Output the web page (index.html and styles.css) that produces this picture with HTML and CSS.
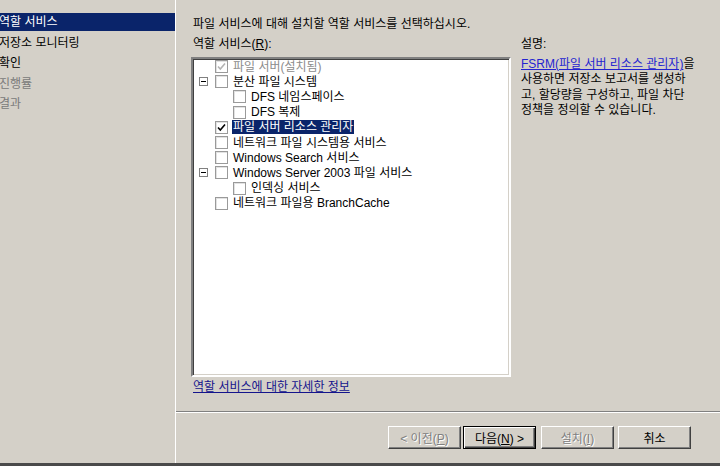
FILE: index.html
```html
<!DOCTYPE html>
<html lang="ko">
<head>
    <meta charset="UTF-8">
    <meta name="viewport" content="width=device-width, initial-scale=1.0">
    <title>역할 서비스 선택</title>
    <link rel="stylesheet" href="styles.css">
</head>
<body>
    <div class="wizard">
        <!-- Wizard steps -->
        <nav class="steps">
            <div class="step current">역할 서비스</div>
            <div class="step">저장소 모니터링</div>
            <div class="step">확인</div>
            <div class="step future">진행률</div>
            <div class="step future">결과</div>
        </nav>

        <div class="pane">
            <div class="page">
                <p class="intro">파일 서비스에 대해 설치할 역할 서비스를 선택하십시오.</p>

                <div class="columns">
                    <div class="services">
                        <div class="label">역할 서비스(<u>R</u>):</div>

                        <div class="tree">
                            <div class="row disabled">
                                <span class="exp"></span>
                                <span class="check"><svg viewBox="0 0 11 11"><path d="M2 5.5 L4.3 8 L9 2.5"/></svg></span>
                                <span class="text">파일 서버(설치됨)</span>
                            </div>
                            <div class="row">
                                <span class="exp"><i class="toggle"></i></span>
                                <span class="check"></span>
                                <span class="text">분산 파일 시스템</span>
                            </div>
                            <div class="row sub">
                                <span class="exp"></span>
                                <span class="check"></span>
                                <span class="text">DFS 네임스페이스</span>
                            </div>
                            <div class="row sub">
                                <span class="exp"></span>
                                <span class="check"></span>
                                <span class="text">DFS 복제</span>
                            </div>
                            <div class="row selected">
                                <span class="exp"></span>
                                <span class="check"><svg viewBox="0 0 11 11"><path d="M2 5.5 L4.3 8 L9 2.5"/></svg></span>
                                <span class="text">파일 서버 리소스 관리자</span>
                            </div>
                            <div class="row">
                                <span class="exp"></span>
                                <span class="check"></span>
                                <span class="text">네트워크 파일 시스템용 서비스</span>
                            </div>
                            <div class="row">
                                <span class="exp"></span>
                                <span class="check"></span>
                                <span class="text">Windows Search 서비스</span>
                            </div>
                            <div class="row">
                                <span class="exp"><i class="toggle"></i></span>
                                <span class="check"></span>
                                <span class="text">Windows Server 2003 파일 서비스</span>
                            </div>
                            <div class="row sub">
                                <span class="exp"></span>
                                <span class="check"></span>
                                <span class="text">인덱싱 서비스</span>
                            </div>
                            <div class="row">
                                <span class="exp"></span>
                                <span class="check"></span>
                                <span class="text">네트워크 파일용 BranchCache</span>
                            </div>
                        </div>

                        <a class="more" href="#">역할 서비스에 대한 자세한 정보</a>
                    </div>

                    <div class="desc">
                        <div class="label">설명:</div>
                        <p><a href="#">FSRM(파일 서버 리소스 관리자)</a>을<br>
                        사용하면 저장소 보고서를 생성하<br>
                        고, 할당량을 구성하고, 파일 차단<br>
                        정책을 정의할 수 있습니다.</p>
                    </div>
                </div>
            </div>

            <!-- Buttons -->
            <div class="footer">
                <button type="button" class="btn prev" disabled>&lt; 이전(<u>P</u>)</button>
                <button type="button" class="btn next">다음(<u>N</u>) &gt;</button>
                <button type="button" class="btn install" disabled>설치(<u>I</u>)</button>
                <button type="button" class="btn cancel">취소</button>
            </div>
        </div>
    </div>
</body>
</html>
```

FILE: styles.css
```css
body {
    margin: 0;
    background-color: #d4d0c8;
    font-family: "Liberation Sans", "Noto Sans CJK KR", sans-serif;
    font-size: 12px;
    color: #000000;
    overflow: hidden;
}

.wizard {
    display: flex;
    width: 720px;
    height: 463px;
    border-bottom: 3px solid #4a4a4a;
}

/* Left step list */
.steps {
    width: 175px;
    flex: none;
    padding-top: 13px;
    border-right: 1px solid #ffffff;
    overflow: hidden;
}

.step {
    height: 18px;
    line-height: 18px;
    margin-bottom: 2.5px;
    text-indent: -1px;
    white-space: nowrap;
}

.step.current {
    background-color: #0a246a;
    color: #ffffff;
}

.step.future {
    color: #7a7a7a;
}

/* Right side */
.pane {
    flex: 1;
    display: flex;
    flex-direction: column;
}

.page {
    height: 411px;
    box-sizing: border-box;
    padding: 17px 0 0 15px;
}

.intro {
    margin: 0 0 5px 2px;
    line-height: 15px;
}

.columns {
    display: flex;
    gap: 8px;
}

.label {
    line-height: 15px;
    margin-left: 2px;
    margin-bottom: 5px;
}

.tree {
    width: 320px;
    height: 320px;
    box-sizing: border-box;
    background-color: #ffffff;
    border: 2px solid;
    border-color: #808080 #ffffff #ffffff #808080;
    box-shadow: inset 1px 1px 0 #404040, inset -1px -1px 0 #d4d0c8;
    padding-top: 0;
}

.row {
    display: flex;
    align-items: center;
    height: 15.2px;
    white-space: nowrap;
}

.exp {
    width: 22px;
    flex: none;
    display: flex;
    align-items: center;
}

.sub .exp {
    width: 40px;
}

.toggle {
    position: relative;
    width: 9px;
    height: 9px;
    box-sizing: border-box;
    margin-left: 6px;
    border: 1px solid #808080;
    background-color: #ffffff;
}

.toggle::after {
    content: "";
    position: absolute;
    left: 1px;
    top: 3px;
    width: 5px;
    height: 1px;
    background-color: #000000;
}

.check {
    width: 13px;
    height: 13px;
    flex: none;
    box-sizing: border-box;
    border: 1px solid #9a9a9a;
    background-color: #ffffff;
    box-shadow: inset 1px 1px 0 #e2e2e2;
    display: flex;
    align-items: center;
    justify-content: center;
}

.check svg {
    width: 11px;
    height: 11px;
}

.check path {
    fill: none;
    stroke: #000000;
    stroke-width: 1.6;
}

.disabled .check path {
    stroke: #b4b4b4;
}

.disabled .text {
    color: #8c8c8c;
}

.text {
    margin-left: 4px;
    padding: 0 1px;
    line-height: 14px;
}

.selected .text {
    background-color: #0a246a;
    color: #ffffff;
}

.more {
    display: inline-block;
    margin: 3px 0 0 2px;
    line-height: 15px;
    color: #14148c;
}

.desc p {
    margin: 4px 0 0 2px;
    line-height: 15.4px;
    white-space: nowrap;
}

.desc a {
    color: #2424d0;
}

/* Bottom button bar */
.footer {
    flex: 1;
    display: flex;
    justify-content: flex-end;
    align-items: flex-start;
    padding: 14px 29px 0 0;
    border-top: 1px solid #808080;
    box-shadow: inset 0 1px 0 #ffffff;
}

.btn {
    width: 73px;
    height: 23px;
    box-sizing: border-box;
    padding: 0;
    font-family: inherit;
    font-size: 12px;
    color: #000000;
    background-color: #d4d0c8;
    border: 1px solid;
    border-color: #ffffff #404040 #404040 #ffffff;
    box-shadow: inset -1px -1px 0 #808080;
}

.btn:disabled {
    color: #808080;
    text-shadow: 1px 1px 0 #ffffff;
}

.next {
    margin-left: 2px;
    border: 1px solid #000000;
    box-shadow: inset 1px 1px 0 #ffffff, inset -1px -1px 0 #404040, inset -2px -2px 0 #808080;
}

.install {
    margin-left: 5px;
}

.cancel {
    margin-left: 4px;
}
```
